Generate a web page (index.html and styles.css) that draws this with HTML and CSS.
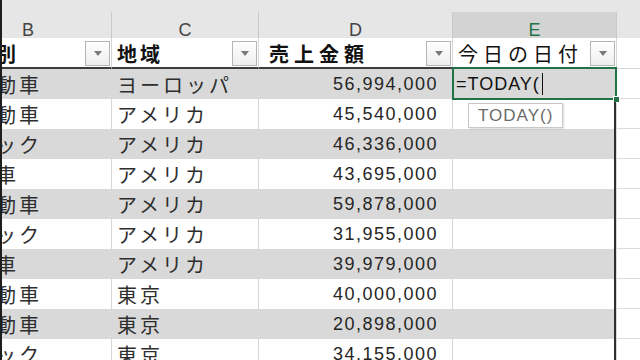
FILE: index.html
```html
<!DOCTYPE html>
<html lang="ja">
<head>
<meta charset="utf-8">
<title>Sheet</title>
<link rel="stylesheet" href="styles.css">
</head>
<body>
<div class="sheet">
  <div class="topbar"></div>
  <div class="colheads">
    <div class="ch">B</div>
    <div class="ch">C</div>
    <div class="ch">D</div>
    <div class="ch ch-sel">E</div>
    <div class="ch ch-last"></div>
  </div>

  <div class="row row-head">
    <div class="cell"><span class="ht">車種別</span><span class="dd"></span></div>
    <div class="cell"><span class="ht">地域</span><span class="dd"></span></div>
    <div class="cell"><span class="ht ht-wide">売上金額</span><span class="dd"></span></div>
    <div class="cell"><span class="ht ht-light">今日の日付</span><span class="dd"></span></div>
    <div class="cell cell-f"></div>
  </div>

  <div class="row band">
    <div class="cell jp">軽自動車</div><div class="cell jp">ヨーロッパ</div><div class="cell num">56,994,000</div><div class="cell edit">=TODAY(<span class="caret"></span></div><div class="cell cell-f"></div>
  </div>
  <div class="row">
    <div class="cell jp">軽自動車</div><div class="cell jp">アメリカ</div><div class="cell num">45,540,000</div><div class="cell"></div><div class="cell cell-f"></div>
  </div>
  <div class="row band">
    <div class="cell jp">トラック</div><div class="cell jp">アメリカ</div><div class="cell num">46,336,000</div><div class="cell"></div><div class="cell cell-f"></div>
  </div>
  <div class="row">
    <div class="cell jp">乗用車</div><div class="cell jp">アメリカ</div><div class="cell num">43,695,000</div><div class="cell"></div><div class="cell cell-f"></div>
  </div>
  <div class="row band">
    <div class="cell jp">軽自動車</div><div class="cell jp">アメリカ</div><div class="cell num">59,878,000</div><div class="cell"></div><div class="cell cell-f"></div>
  </div>
  <div class="row">
    <div class="cell jp">トラック</div><div class="cell jp">アメリカ</div><div class="cell num">31,955,000</div><div class="cell"></div><div class="cell cell-f"></div>
  </div>
  <div class="row band">
    <div class="cell jp">乗用車</div><div class="cell jp">アメリカ</div><div class="cell num">39,979,000</div><div class="cell"></div><div class="cell cell-f"></div>
  </div>
  <div class="row">
    <div class="cell jp">軽自動車</div><div class="cell jp">東京</div><div class="cell num">40,000,000</div><div class="cell"></div><div class="cell cell-f"></div>
  </div>
  <div class="row band">
    <div class="cell jp">軽自動車</div><div class="cell jp">東京</div><div class="cell num">20,898,000</div><div class="cell"></div><div class="cell cell-f"></div>
  </div>
  <div class="row">
    <div class="cell jp">トラック</div><div class="cell jp">東京</div><div class="cell num">34,155,000</div><div class="cell"></div><div class="cell cell-f"></div>
  </div>

  <div class="selection"><span class="handle"></span></div>
  <div class="tip">TODAY()</div>
  <div class="rule"></div>
  <div class="edge"></div>
</div>
</body>
</html>
```

FILE: styles.css
```css
* { box-sizing: border-box; }

html, body {
  margin: 0;
  padding: 0;
  background: #ffffff;
  overflow: hidden;
}

.sheet {
  position: relative;
  width: 640px;
  height: 360px;
  overflow: hidden;
  background: #ffffff;
  font-family: "Noto Sans CJK JP", "Liberation Sans", sans-serif;
  color: #2b2b2b;
}

.topbar {
  height: 12px;
  background: #e6e6e6;
}

.colheads,
.row {
  display: grid;
  grid-template-columns: 167px 147px 194px 164px 80px;
  margin-left: -55px;
}

.colheads {
  height: 26px;
  background: #e6e6e6;
}

.ch {
  display: flex;
  align-items: center;
  justify-content: center;
  padding-top: 6px;
  border-right: 1px solid #c9c9c9;
  font-family: "Liberation Sans", Arial, sans-serif;
  font-size: 18px;
  color: #444444;
}

.ch-sel {
  background: #d3d3d3;
  color: #217346;
  border-bottom: 2px solid #217346;
  padding-top: 8px;
}

.ch-last { border-right: none; }

.row {
  height: 30px;
}

.row-head {
  height: 31px;
}

.cell {
  display: flex;
  align-items: center;
  border-right: 1px solid #d6d6d6;
  background: #ffffff;
  overflow: hidden;
  white-space: nowrap;
}

.row-head .cell {
  border-bottom: 2px solid #3c3c3c;
  justify-content: space-between;
  padding-left: 5px;
}

.row-head .cell-f {
  border-bottom: 1px solid #d6d6d6;
}

.band .cell {
  background: #d9d9d9;
  border-right-color: #d9d9d9;
}

.band .cell-f,
.cell-f {
  background: #ffffff;
  border-right: none;
  border-bottom: 1px solid #dcdcdc;
}

.ht {
  font-weight: 700;
  font-size: 20px;
  letter-spacing: 3px;
  color: #111111;
  padding-top: 2px;
}

.ht-wide {
  letter-spacing: 5px;
  padding-left: 5px;
}

.ht-light {
  font-weight: 400;
  letter-spacing: 5px;
  color: #111111;
}

.dd {
  flex: none;
  width: 25px;
  height: 25px;
  margin-right: 1px;
  margin-top: 2px;
  border: 1px solid #b5b5b5;
  background: linear-gradient(#ffffff, #eeeeee);
  display: flex;
  align-items: center;
  justify-content: center;
}

.dd::after {
  content: "";
  width: 0;
  height: 0;
  border-left: 4px solid transparent;
  border-right: 4px solid transparent;
  border-top: 5px solid #7a7a7a;
}

.jp {
  padding-left: 5px;
  font-size: 20px;
  letter-spacing: 3px;
  color: #2e2e2e;
}

.num {
  justify-content: flex-end;
  padding-right: 14px;
  font-family: "Liberation Sans", Arial, sans-serif;
  font-size: 18px;
  letter-spacing: 1.5px;
  color: #262626;
}

.edit {
  padding-left: 3px;
  font-family: "Liberation Sans", Arial, sans-serif;
  font-size: 18px;
  letter-spacing: 1px;
  color: #111111;
}

.caret {
  display: inline-block;
  width: 1px;
  height: 22px;
  margin-left: 2px;
  background: #111111;
}

.selection {
  position: absolute;
  left: 452px;
  top: 67px;
  width: 165px;
  height: 33px;
  border: 2px solid #217346;
}

.handle {
  position: absolute;
  right: -5px;
  bottom: -5px;
  width: 7px;
  height: 7px;
  background: #217346;
  border: 1px solid #ffffff;
}

.tip {
  position: absolute;
  left: 468px;
  top: 103px;
  width: 95px;
  height: 25px;
  padding-left: 9px;
  display: flex;
  align-items: center;
  background: #ffffff;
  border: 1px solid #c8c8c8;
  box-shadow: 1px 1px 2px rgba(0, 0, 0, 0.15);
  font-family: "Liberation Sans", Arial, sans-serif;
  font-size: 17px;
  letter-spacing: 1px;
  color: #6b6b6b;
}

.rule {
  position: absolute;
  left: 614px;
  top: 102px;
  width: 2px;
  height: 258px;
  background: #2e2e2e;
}

.edge {
  position: absolute;
  left: 0;
  top: 0;
  width: 2px;
  height: 360px;
  background: #1e1e1e;
}
```
